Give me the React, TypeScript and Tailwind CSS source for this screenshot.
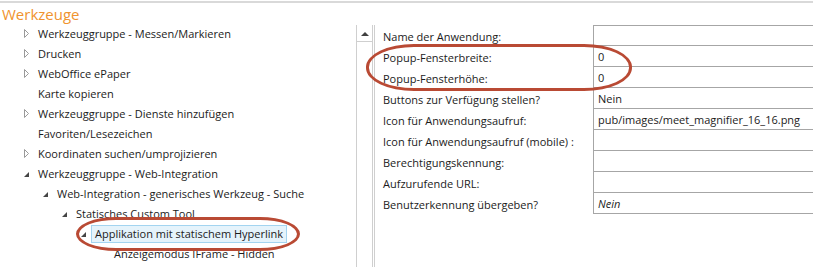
import React from "react";

const FONT = { fontFamily: '"Open Sans", "Noto Sans", "Liberation Sans", sans-serif' };

type Node = { label: string; level: number; icon: "closed" | "open" | "none"; selected?: boolean };

const nodes: Node[] = [
  { label: "Werkzeuggruppe - Messen/Markieren", level: 0, icon: "closed" },
  { label: "Drucken", level: 0, icon: "closed" },
  { label: "WebOffice ePaper", level: 0, icon: "closed" },
  { label: "Karte kopieren", level: 0, icon: "none" },
  { label: "Werkzeuggruppe - Dienste hinzufügen", level: 0, icon: "closed" },
  { label: "Favoriten/Lesezeichen", level: 0, icon: "none" },
  { label: "Koordinaten suchen/umprojizieren", level: 0, icon: "closed" },
  { label: "Werkzeuggruppe - Web-Integration", level: 0, icon: "open" },
  { label: "Web-Integration - generisches Werkzeug - Suche", level: 1, icon: "open" },
  { label: "Statisches Custom Tool", level: 2, icon: "open" },
  { label: "Applikation mit statischem Hyperlink", level: 3, icon: "open", selected: true },
  { label: "Anzeigemodus IFrame - Hidden", level: 4, icon: "none" },
];

const padClass = ["pl-[22px]", "pl-[41px]", "pl-[60px]", "pl-[79px]", "pl-[98px]"];

function Glyph({ kind }: { kind: Node["icon"] }) {
  if (kind === "closed")
    return (
      <svg width="12" height="20" viewBox="0 0 12 20">
        <path d="M2.5 5.5 L6.5 9.5 L2.5 13.5 Z" fill="none" stroke="#9a9a9a" strokeWidth="1" />
      </svg>
    );
  if (kind === "open")
    return (
      <svg width="12" height="20" viewBox="0 0 12 20">
        <path d="M7 8 L7 13 L2 13 Z" fill="#454545" />
      </svg>
    );
  return <span className="inline-block w-[12px]" />;
}

type Prop = { label: string; value: string; italic?: boolean };
const props: Prop[] = [
  { label: "Name der Anwendung:", value: "" },
  { label: "Popup-Fensterbreite:", value: "0" },
  { label: "Popup-Fensterhöhe:", value: "0" },
  { label: "Buttons zur Verfügung stellen?", value: "Nein" },
  { label: "Icon für Anwendungsaufruf:", value: "pub/images/meet_magnifier_16_16.png" },
  { label: "Icon für Anwendungsaufruf (mobile) :", value: "" },
  { label: "Berechtigungskennung:", value: "" },
  { label: "Aufzurufende URL:", value: "" },
  { label: "Benutzerkennung übergeben?", value: "Nein", italic: true },
];

export default function App() {
  return (
    <div className="relative w-[813px] h-[267px] bg-white overflow-hidden text-[11px] text-[#1b1b1b]" style={FONT}>
      <div className="h-[1px]" />
      <div className="h-[2px] bg-[#d9d9d9]" />
      <div className="flex">
        {/* Tree panel */}
        <div className="w-[356px] shrink-0">
          <div className="h-[21px] pl-[2px] pt-[2px] text-[15px] leading-[19px] text-[#f0932e]">Werkzeuge</div>
          <div className="flex flex-col">
            {nodes.map((n, i) => (
              <div key={i} className={`flex items-center h-[20px] ${padClass[n.level]}`}>
                <Glyph kind={n.icon} />
                <span
                  className={`h-[18px] leading-[16px] px-[3px] border whitespace-nowrap ${
                    n.selected ? "bg-[#e5f3fb] border-[#a3d4f0]" : "border-transparent"
                  }`}
                >
                  {n.label}
                </span>
              </div>
            ))}
          </div>
        </div>
        {/* Scrollbar column */}
        <div className="w-[17px] shrink-0 mt-[22px] h-[250px] border-l border-r border-[#cfcfcf]">
          <div className="h-[17px] border-b border-[#cfcfcf] flex items-center justify-center">
            <svg width="8" height="5" viewBox="0 0 8 5">
              <path d="M0 5 L4 1 L8 5 Z" fill="#404040" />
            </svg>
          </div>
        </div>
        {/* Property grid */}
        <div className="flex-1 mt-[22px] ml-[1px] border-l border-[#cfcfcf] h-[250px]">
          <div className="flex flex-col">
            {props.map((p, i) => (
              <div key={i} className="flex h-[21px]">
                <div className="w-[218px] shrink-0 pl-[8px] pt-[2px] leading-[20px] whitespace-nowrap">{p.label}</div>
                <div
                  className={`flex-1 border-l border-b border-[#a6a6a6] ${i === 0 ? "border-t" : ""} pl-[4px] pt-[1px] leading-[19px] whitespace-nowrap ${
                    p.italic ? "italic" : ""
                  }`}
                >
                  {p.value}
                </div>
              </div>
            ))}
          </div>
        </div>
      </div>
      {/* Annotation ellipses */}
      <div className="absolute left-[76px] top-[217px] w-[224px] h-[34px] rounded-[40px/17px] border-[3px] border-[#b94a34]" />
      <div className="absolute left-[366px] top-[44px] w-[266px] h-[47px] rounded-[48px/23px] border-[3px] border-[#b94a34]" />
    </div>
  );
}
